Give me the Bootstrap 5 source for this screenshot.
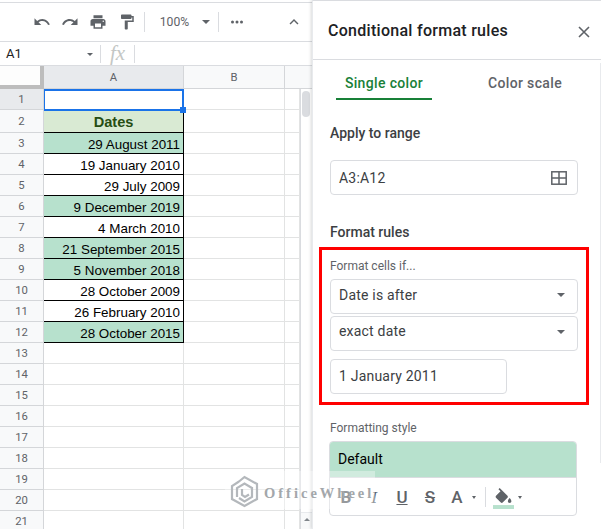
<!DOCTYPE html>
<html lang="en">
<head>
<meta charset="utf-8">
<title>Conditional format rules</title>
<link href="https://cdn.jsdelivr.net/npm/bootstrap@5.3.0/dist/css/bootstrap.min.css" rel="stylesheet">
<style>
html,body{height:529px;overflow:hidden;background:#fff;font-family:Roboto,"Liberation Sans",sans-serif}
.stage{width:601px;height:529px;position:relative;overflow:hidden}
.sheet{width:312px;flex:none;border-top:1px solid #dadce0;margin-top:2px;height:527px}
.tools{padding:0 0 0 33px;color:#5f6368;border-bottom:1px solid #dadce0;height:39px}
.tools svg{display:block;flex:none}
.gap10{margin-left:10px}
.sep{width:1px;height:20px;background:#dadce0;flex:none}
.zoomv{font-size:12.2px;color:#5f6368;width:57px;text-align:center;margin-left:1px}
.fbar{height:24px;border-bottom:1px solid #dadce0;font-size:13px;color:#222;position:relative}
.nmbox{width:100px;padding-left:6px;height:100%;padding-top:1px}
.fxsign{font-family:"Liberation Serif",serif;font-style:italic;font-size:21px;color:#c4c7c5;width:35px;text-align:center;border-left:1px solid #dadce0;border-right:1px solid #dadce0;height:18px;line-height:17px}
.tinycaret{width:0;height:0;border-left:3px solid transparent;border-right:3px solid transparent;border-top:3px solid #5f6368;margin-left:auto;margin-right:7px}
.gridw{display:grid;grid-template-columns:44px 140px 101px 15px 12px;grid-template-rows:23px 21px 23px repeat(19,21px);font-size:13.4px;font-family:"Liberation Sans",Arial,sans-serif;line-height:1}
.hd{background:#f8f9fa;color:#5f6368;border-right:1px solid #d4d6d9;border-bottom:1px solid #d4d6d9;font-size:11.3px;display:flex;align-items:center;justify-content:center;font-family:Roboto,sans-serif;padding-top:1px}
.hd.on{background:#e8eaed}
.corner{background:#fdfdfd;border-right:4px solid #bdbdbd;border-bottom:4px solid #bdbdbd}
.cl{border-right:1px solid #e2e3e3;border-bottom:1px solid #e2e3e3}
.dt{border-right:1px solid #000;border-bottom:1px solid #000;text-align:right;padding:4px 3px 0 0;display:flex;align-items:center;justify-content:flex-end;color:#000}
.gn{background:#b7e1cd}
.ttl{background:#d9ead3;color:#274e13;font-weight:700;font-size:14.6px;justify-content:center;padding:2px 0 0}
.sel{border:2px solid #1a73e8;border-left-width:1px;position:relative;height:22px}
.hnd{position:absolute;right:-4px;bottom:-4px;width:6px;height:6px;background:#1a73e8}
.sb{grid-column:5;grid-row:2/23;background:#fff;border-left:1px solid #dadce0;position:relative}
.thumb{width:8px;height:26px;background:#dadce0;border-radius:4px;position:absolute;left:1px;top:2px}
.sbarrow{position:absolute;left:0;right:0;top:423px;height:18px;background:#f8f9fa;border-top:1px solid #e8eaed;padding:5px 0 0 3px}
.sbarrow i{display:block;width:0;height:0;border-left:3px solid transparent;border-right:3px solid transparent;border-bottom:3px solid #80868b}
.sbtop{grid-column:4/6;background:#f8f9fa;border-bottom:1px solid #d4d6d9}
.panel{width:289px;flex:none;height:529px;border-left:1px solid #e8eaed;box-shadow:-1px 0 3px rgba(60,64,67,.2);background:#fff;color:#3c4043;z-index:2;font-size:14px;padding-top:2px;border-top:1px solid #dadce0;position:relative}
.phead{height:57px;padding:0 10px 0 15px;border-bottom:1px solid #dadce0;color:#202124;font-size:16px;font-weight:500}
.phead b{font-weight:500;letter-spacing:.28px}
.tabs{height:40px;padding-top:12px;font-size:14px;font-weight:500;letter-spacing:.35px;position:relative}
.tabg{color:#188038;width:96px;margin-left:23px;text-align:center;border-bottom:2px solid #188038;height:28px;padding-top:1px}
.tabn{color:#5f6368;margin-left:56px;padding-top:1px}
.body{padding:0 23px 0 17px}
.lab{font-weight:500;font-size:14px;color:#3c4043;line-height:16px}
.sub{font-size:12px;color:#5f6368;line-height:14px}
.fld{border:1px solid #dadce0;border-radius:4px;height:35px;padding:0 8px;font-size:14px;letter-spacing:.2px;color:#3c4043;background:#fff}
.caret1{width:0;height:0;border-left:4px solid transparent;border-right:4px solid transparent;border-top:4px solid #5f6368;margin-left:auto;margin-right:12px}
.alarm{border:3px solid #f00;margin:7px -11px 0;padding:9px 8px;height:158px}
.stl{border:1px solid #dadce0;border-radius:4px;height:75px;margin-left:-1px;margin-right:1px;overflow:hidden;margin-top:6px}
.sttop{background:#b7e1cd;height:36px;padding-left:8px;line-height:34px;color:#000;font-size:14px;border-bottom:1px solid #dadce0}
.stbar{height:38px;color:#5f6368;padding-left:2px;font-weight:500}
.bi1{width:28px;text-align:center;font-size:17px;line-height:1;flex:none}
.mini{width:0;height:0;border-left:2.5px solid transparent;border-right:2.5px solid transparent;border-top:3px solid #5f6368;flex:none}
.wm{position:absolute;left:225px;top:471px;width:150px;height:38px;padding-left:5px;z-index:5;color:#a3a7ab;background:rgba(255,255,255,.35);font-family:"Liberation Serif",serif;font-size:14.5px;font-weight:700;letter-spacing:3px;line-height:1}
.closex{margin-top:1px}
.pscroll{position:absolute;right:0;top:62px;width:1px;height:400px;background:#e8eaed}
</style>
</head>
<body>
<div class="stage d-flex">
  <div class="sheet">
    <div class="tools d-flex align-items-center">
      <svg width="18" height="18" viewBox="0 0 24 24" fill="#5f6368"><path d="M12.500 8c-2.650 0-5.050 1-6.900 2.600L2 7v9h9l-3.600-3.600c1.400-1.200 3.200-1.900 5.100-1.900 3.500 0 6.500 2.300 7.600 5.500l2.400-.8C21 11.800 17.100 8 12.500 8z"/></svg>
      <svg class="gap10" width="18" height="18" viewBox="0 0 24 24" fill="#5f6368"><path d="M18.400 10.600C16.550 9 14.150 8 11.500 8c-4.650 0-8.580 3.030-9.960 7.220L3.900 16c1.050-3.190 4.050-5.500 7.600-5.500 1.950 0 3.730.72 5.120 1.880L13 16h9V7l-3.600 3.600z"/></svg>
      <svg class="gap10" width="18" height="18" viewBox="0 0 24 24" fill="#5f6368"><path d="M19 8H5c-1.660 0-3 1.340-3 3v6h4v4h12v-4h4v-6c0-1.660-1.340-3-3-3zm-3 11H8v-5h8v5zm3-7c-.55 0-1-.45-1-1s.45-1 1-1 1 .45 1 1-.45 1-1 1zm-1-9H6v4h12V3z"/></svg>
      <svg style="margin-left:11px" width="18" height="18" viewBox="0 0 24 24" fill="#5f6368"><path d="M18 4V3c0-.55-.45-1-1-1H5c-.55 0-1 .45-1 1v4c0 .55.45 1 1 1h12c.55 0 1-.45 1-1V6h1v4H9v11c0 .55.45 1 1 1h2c.55 0 1-.45 1-1v-9h8V4h-3z"/></svg>
      <div class="sep" style="margin-left:8px"></div>
      <div class="zoomv">100%</div>
      <div class="mini" style="border-left-width:4px;border-right-width:4px;border-top-width:4px;margin-left:-1px"></div>
      <div class="sep" style="margin-left:8px"></div>
      <svg style="margin-left:9px" width="18" height="18" viewBox="0 0 24 24" fill="#5f6368"><circle cx="6" cy="12" r="2"/><circle cx="12" cy="12" r="2"/><circle cx="18" cy="12" r="2"/></svg>
      <svg style="margin-left:39px" width="18" height="18" viewBox="0 0 24 24" fill="#5f6368"><path d="M7.400 15.400L12 10.800l4.600 4.600L18 14l-6-6-6 6z"/></svg>
    </div>
    <div class="fbar d-flex align-items-center">
      <div class="nmbox d-flex align-items-center">A1<span class="tinycaret"></span></div>
      <div class="fxsign">fx</div>
    </div>
    <div class="gridw">
      <div class="corner"></div><div class="hd on">A</div><div class="hd">B</div><div class="sbtop"></div>

      <div class="hd on">1</div><div class="sel"><span class="hnd"></span></div><div class="cl"></div><div class="cl"></div>
      <div class="sb"><div class="thumb"></div><div class="sbarrow"><i></i></div></div>
      <div class="hd">2</div><div class="dt ttl">Dates</div><div class="cl"></div><div class="cl"></div>
      <div class="hd">3</div><div class="dt gn">29 August 2011</div><div class="cl"></div><div class="cl"></div>
      <div class="hd">4</div><div class="dt">19 January 2010</div><div class="cl"></div><div class="cl"></div>
      <div class="hd">5</div><div class="dt">29 July 2009</div><div class="cl"></div><div class="cl"></div>
      <div class="hd">6</div><div class="dt gn">9 December 2019</div><div class="cl"></div><div class="cl"></div>
      <div class="hd">7</div><div class="dt">4 March 2010</div><div class="cl"></div><div class="cl"></div>
      <div class="hd">8</div><div class="dt gn">21 September 2015</div><div class="cl"></div><div class="cl"></div>
      <div class="hd">9</div><div class="dt gn">5 November 2018</div><div class="cl"></div><div class="cl"></div>
      <div class="hd">10</div><div class="dt">28 October 2009</div><div class="cl"></div><div class="cl"></div>
      <div class="hd">11</div><div class="dt">26 February 2010</div><div class="cl"></div><div class="cl"></div>
      <div class="hd">12</div><div class="dt gn">28 October 2015</div><div class="cl"></div><div class="cl"></div>
      <div class="hd">13</div><div class="cl"></div><div class="cl"></div><div class="cl"></div>
      <div class="hd">14</div><div class="cl"></div><div class="cl"></div><div class="cl"></div>
      <div class="hd">15</div><div class="cl"></div><div class="cl"></div><div class="cl"></div>
      <div class="hd">16</div><div class="cl"></div><div class="cl"></div><div class="cl"></div>
      <div class="hd">17</div><div class="cl"></div><div class="cl"></div><div class="cl"></div>
      <div class="hd">18</div><div class="cl"></div><div class="cl"></div><div class="cl"></div>
      <div class="hd">19</div><div class="cl"></div><div class="cl"></div><div class="cl"></div>
      <div class="hd">20</div><div class="cl"></div><div class="cl"></div><div class="cl"></div>
      <div class="hd">21</div><div class="cl"></div><div class="cl"></div><div class="cl"></div>
    </div>
  </div>

  <div class="panel">
    <div class="phead d-flex align-items-center justify-content-between">
      <b>Conditional format rules</b>
      <svg class="closex" width="14" height="14" viewBox="0 0 14 14" stroke="#5f6368" stroke-width="1.600" fill="none"><path d="M2 2l10 10M12 2L2 12"/></svg>
    </div>
    <div class="tabs d-flex">
      <div class="tabg">Single color</div>
      <div class="tabn">Color scale</div>
    </div>
    <div class="body">
      <div class="lab" style="margin-top:25px">Apply to range</div>
      <div class="fld d-flex align-items-center justify-content-between" style="margin-top:19px;padding:1px 10px 0 8px">
        <span>A3:A12</span>
        <svg width="16" height="14" viewBox="0 0 16 14" fill="none" stroke="#5f6368" stroke-width="1.500"><rect x=".8" y=".8" width="14.400" height="12.400"/><path d="M8 1v12M1 7h14"/></svg>
      </div>
      <div class="lab" style="margin-top:29px">Format rules</div>
      <div class="alarm">
        <div class="sub">Format cells if...</div>
        <div class="fld d-flex align-items-center" style="margin-top:6px;padding:0 0 3px 8px"><span>Date is after</span><span class="caret1"></span></div>
        <div class="fld d-flex align-items-center" style="margin-top:2px;padding:0 0 4px 8px"><span>exact date</span><span class="caret1"></span></div>
        <div class="fld d-flex align-items-center" style="margin-top:8px;width:177px"><span>1 January 2011</span></div>
      </div>
      <div class="sub" style="margin-top:16px">Formatting style</div>
      <div class="stl">
        <div class="sttop">Default</div>
        <div class="stbar d-flex align-items-center">
          <span class="bi1 fw-bold">B</span>
          <span class="bi1 fst-italic" style="font-family:'Liberation Serif',serif">I</span>
          <span class="bi1 text-decoration-underline">U</span>
          <span class="bi1 text-decoration-line-through">S</span>
          <span class="bi1" style="margin-left:-1px">A</span>
          <span class="mini" style="margin-left:1px"></span>
          <span class="sep" style="margin:0 7px 0 9px"></span>
          <svg width="21" height="21" viewBox="0 0 24 24" fill="#5f6368" style="margin-top:3px;flex:none"><path d="M16.560 8.940L7.620 0 6.210 1.410l2.380 2.380-5.150 5.150c-.59.59-.59 1.540 0 2.120l5.500 5.500c.29.29.68.44 1.060.44s.77-.15 1.060-.44l5.500-5.500c.59-.58.59-1.530 0-2.120zM19 11.500s-2 2.170-2 3.500c0 1.100.9 2 2 2s2-.9 2-2c0-1.330-2-3.500-2-3.500z"/><rect x="0" y="19.500" width="24" height="4.500" fill="#b7e1cd"/></svg>
          <span class="mini" style="margin-left:4px"></span>
        </div>
      </div>
    </div>
    <div class="pscroll"></div>
  </div>

  <div class="wm d-flex align-items-center">
    <svg width="29" height="33" viewBox="0 0 29 33" fill="none" stroke="#b4b8bc" stroke-width="2.200" style="flex:none;margin-top:3px"><path d="M9 6.500L14.500 2 27 9v15l-12.500 7L2 24V11l7-4.500"/><path d="M7 22V13l7.500-4.500L22 13"/><path d="M22 12v10l-7.500 4.500L9 23"/><path d="M12 14v6l3 2 4-2.500"/></svg>
    <span style="margin-left:5px;padding-top:7px">OfficeWheel</span>
  </div>
</div>
<script src="https://cdn.jsdelivr.net/npm/bootstrap@5.3.0/dist/js/bootstrap.bundle.min.js"></script>
</body>
</html>
